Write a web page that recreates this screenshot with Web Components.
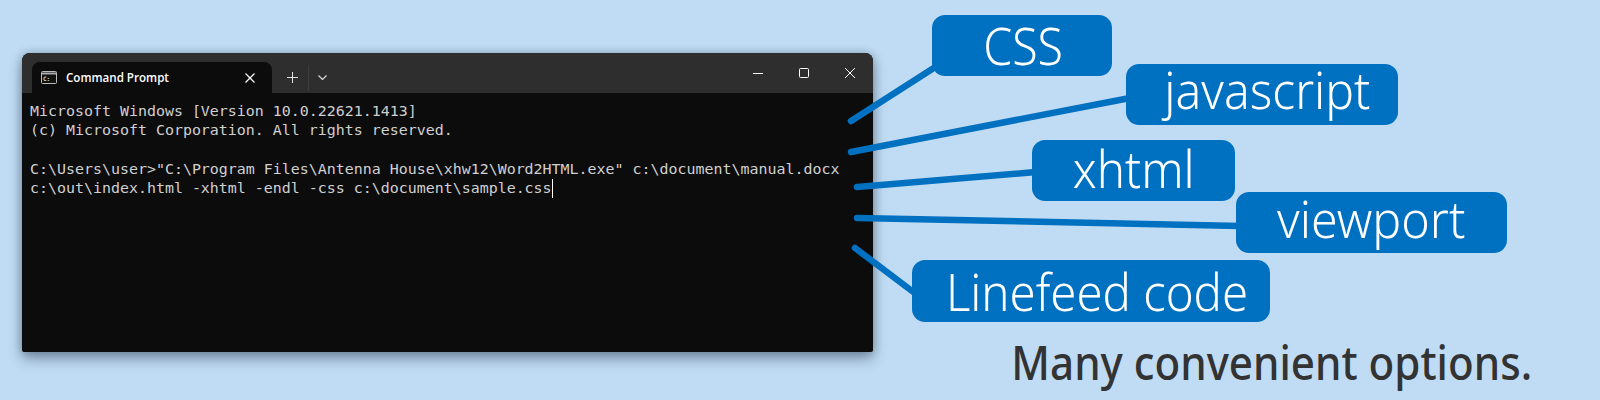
<!DOCTYPE html>
<html lang="en">
<head>
<meta charset="utf-8">
<title>Many convenient options</title>
<style>
  html, body { margin: 0; padding: 0; }
</style>
</head>
<body>
<option-banner>
  <terminal-window title-text="Command Prompt">Microsoft Windows [Version 10.0.22621.1413]
(c) Microsoft Corporation. All rights reserved.

C:\Users\user&gt;"C:\Program Files\Antenna House\xhw12\Word2HTML.exe" c:\document\manual.docx
c:\out\index.html -xhtml -endl -css c:\document\sample.css</terminal-window>
  <callout-pill slot="pills" x="932" y="15" w="180" h="61" dx="1.5" dy="-1" sx="0.895">CSS</callout-pill>
  <callout-pill slot="pills" x="1126" y="64" w="272" h="61" dx="5" dy="-6" sx="0.925">javascript</callout-pill>
  <callout-pill slot="pills" x="1032" y="140" w="203" h="61" dx="0" dy="-3" sx="0.912">xhtml</callout-pill>
  <callout-pill slot="pills" x="1236" y="192" w="271" h="61" dx="0" dy="-5" sx="0.93">viewport</callout-pill>
  <callout-pill slot="pills" x="912" y="260" w="358" h="62" dx="6" dy="0" sx="0.91">Linefeed code</callout-pill>
  <span slot="caption">Many convenient options.</span>
</option-banner>

<script>
class OptionBanner extends HTMLElement {
  constructor() {
    super();
    this.attachShadow({ mode: "open" }).innerHTML = `
      <style>
        :host {
          display: flex;
          position: relative;
          box-sizing: border-box;
          width: 1600px;
          height: 400px;
          padding: 53px 68px 9px 22px;
          overflow: hidden;
          background: #c0dcf4;
        }
        .lines { position: absolute; inset: 0; }
        .lines line { stroke: #0070c0; stroke-width: 6.5; stroke-linecap: round; }
        .caption {
          margin-left: auto;
          align-self: flex-end;
          font: 500 48px/1.2 "Noto Sans", sans-serif;
          color: #333;
          white-space: nowrap;
          transform: scaleX(.878);
          transform-origin: right center;
        }
      </style>
      <slot></slot>
      <svg class="lines" width="1600" height="400">
        <line x1="851" y1="121" x2="940" y2="64"/>
        <line x1="851" y1="152" x2="1130" y2="98"/>
        <line x1="857" y1="187" x2="1036" y2="172"/>
        <line x1="857" y1="218" x2="1240" y2="226"/>
        <line x1="855" y1="248" x2="916" y2="294"/>
      </svg>
      <slot name="pills"></slot>
      <div class="caption"><slot name="caption"></slot></div>
    `;
  }
}

class TerminalWindow extends HTMLElement {
  constructor() {
    super();
    this.attachShadow({ mode: "open" }).innerHTML = `
      <style>
        :host {
          display: flex;
          flex-direction: column;
          flex: none;
          width: 851px;
          height: 299px;
          border-radius: 8px 8px 2px 2px;
          background: #0c0c0c;
          box-shadow: 0 7px 14px rgba(40, 60, 80, .45), 0 0 8px rgba(40, 60, 80, .3);
        }
        .bar {
          display: flex;
          align-items: flex-end;
          flex: none;
          height: 40px;
          padding-left: 10px;
          border-radius: 8px 8px 0 0;
          background: #2e2e2e;
          color: #fff;
        }
        .tab {
          display: flex;
          align-items: center;
          box-sizing: border-box;
          width: 240px;
          height: 31px;
          padding: 0 17px 0 9px;
          border-radius: 8px 8px 0 0;
          background: #0c0c0c;
          font: 600 11.6px "Open Sans", sans-serif;
        }
        .tab .name { margin-left: 9px; flex: 1; }
        .tools { display: flex; align-items: center; height: 31px; margin-left: 15px; }
        .sep { width: 1px; height: 26px; margin: 0 9px 0 10px; background: #3c3c3c; }
        .controls { display: flex; align-items: center; gap: 36px; margin-left: auto; padding-right: 18px; height: 40px; align-self: flex-start; }
        svg { display: block; stroke: #fff; fill: none; stroke-width: 1; }
        svg text { fill: #ddd; stroke: none; font: 700 6px "DejaVu Sans Mono", monospace; }
        pre {
          margin: 0;
          padding: 9px 8px 0;
          font: 14.95px/19.2px "DejaVu Sans Mono", monospace;
          color: #d0d0d0;
        }
        .cursor {
          display: inline-block;
          width: 1px;
          height: 19px;
          vertical-align: top;
          background: #fff;
        }
      </style>
      <div class="bar">
        <div class="tab">
          <svg width="16" height="13" viewBox="0 0 16 13">
            <rect x=".5" y=".5" width="15" height="12" rx="1" stroke="#bbb" fill="#111"/>
            <path d="M1 2.5h14" stroke="#aaa" stroke-width="2"/>
            <text x="2" y="10">C:\</text>
          </svg>
          <span class="name"></span>
          <svg width="10" height="10" viewBox="0 0 10 10" style="stroke-width:1.3"><path d="M.5.5l9 9M9.5.5l-9 9"/></svg>
        </div>
        <div class="tools">
          <svg width="11" height="11" viewBox="0 0 11 11" stroke-opacity=".85"><path d="M5.5 0v11M0 5.5h11"/></svg>
          <span class="sep"></span>
          <svg width="9" height="5" viewBox="0 0 9 5" stroke-opacity=".8" style="stroke-width:1.2"><path d="M.5.5l4 4 4-4"/></svg>
        </div>
        <div class="controls">
          <svg width="10" height="10" viewBox="0 0 10 10"><path d="M0 5.5h10"/></svg>
          <svg width="10" height="10" viewBox="0 0 10 10"><rect x=".5" y=".5" width="9" height="9" rx="1"/></svg>
          <svg width="10" height="10" viewBox="0 0 10 10"><path d="M0 0l10 10M10 0L0 10"/></svg>
        </div>
      </div>
      <pre><slot></slot><span class="cursor"></span></pre>
    `;
  }

  connectedCallback() {
    this.shadowRoot.querySelector(".name").textContent = this.getAttribute("title-text");
  }
}

class CalloutPill extends HTMLElement {
  constructor() {
    super();
    this.attachShadow({ mode: "open" }).innerHTML = `
      <style>
        :host {
          display: flex;
          align-items: center;
          justify-content: center;
          position: absolute;
          border-radius: 13px;
          background: #0070c0;
          color: #fff;
          font: 350 52px/1 "Noto Sans", sans-serif;
          white-space: nowrap;
        }
        span { display: block; }
      </style>
      <span><slot></slot></span>
    `;
  }

  connectedCallback() {
    this.style.left = this.getAttribute("x") + "px";
    this.style.top = this.getAttribute("y") + "px";
    this.style.width = this.getAttribute("w") + "px";
    this.style.height = this.getAttribute("h") + "px";
    const dx = this.getAttribute("dx"), dy = this.getAttribute("dy"), sx = this.getAttribute("sx");
    this.shadowRoot.querySelector("span").style.transform = `translate(${dx}px, ${dy}px) scaleX(${sx})`;
  }
}

customElements.define("option-banner", OptionBanner);
customElements.define("terminal-window", TerminalWindow);
customElements.define("callout-pill", CalloutPill);
</script>
</body>
</html>
